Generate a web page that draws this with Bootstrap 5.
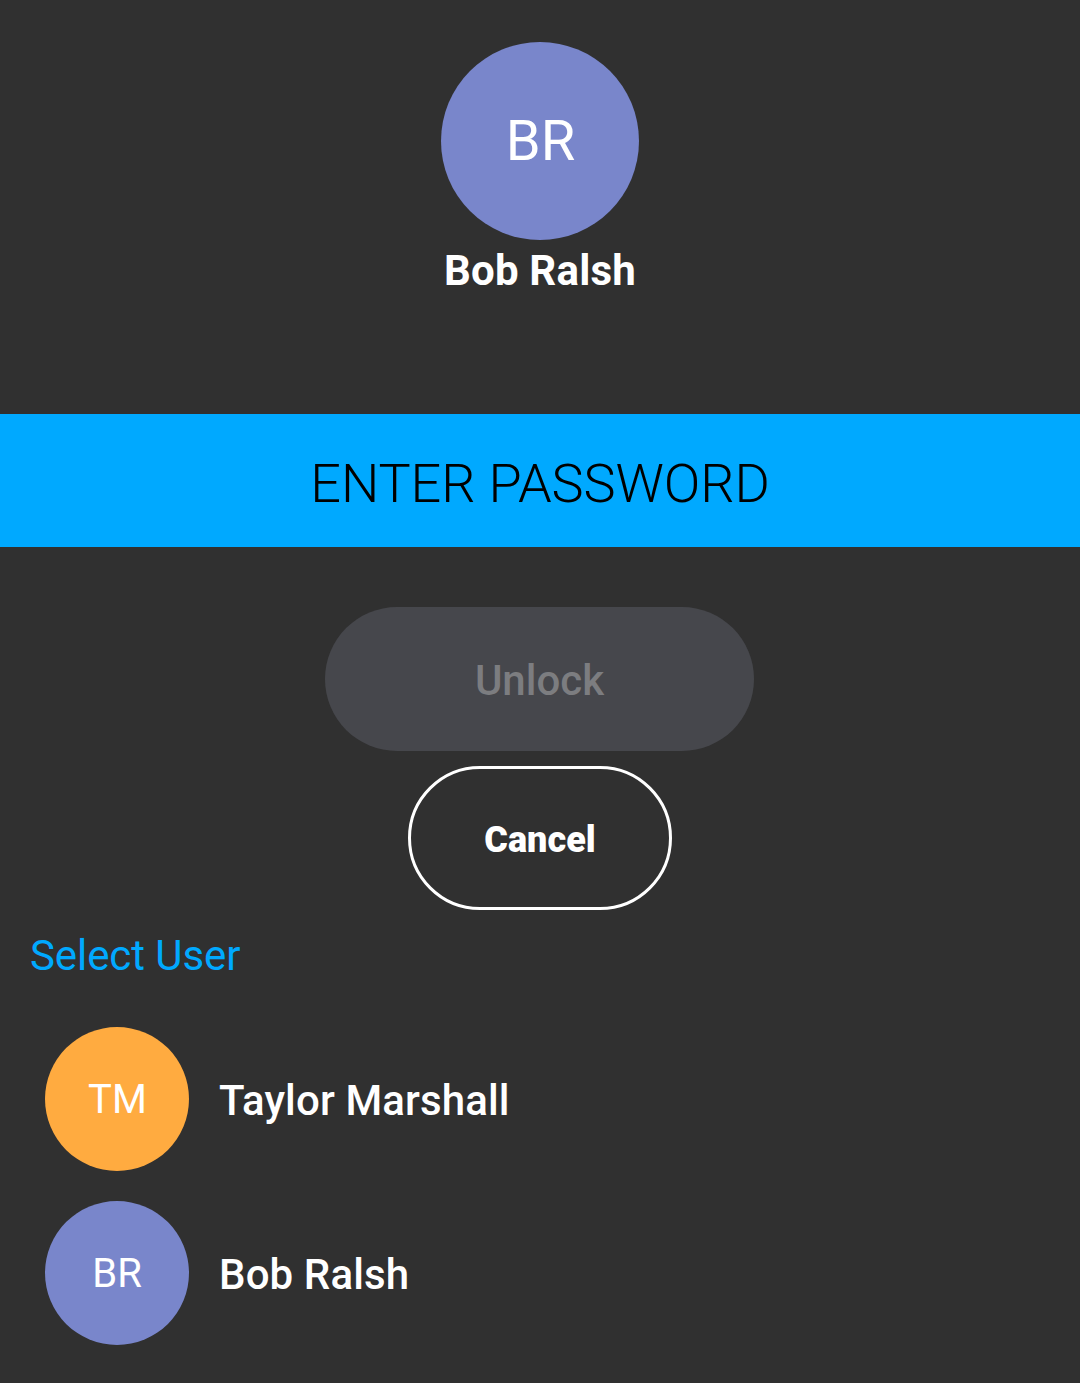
<!DOCTYPE html>
<html lang="en">
<head>
<meta charset="utf-8">
<title>Unlock</title>
<link rel="stylesheet" href="https://cdn.jsdelivr.net/npm/bootstrap@5.3.0/dist/css/bootstrap.min.css">
<style>
html, body { height: 100%; }
body { background: #303030; font-family: Roboto, sans-serif; color: #fff; overflow: hidden; }
.avatar-disc { border-radius: 50%; color: #fff; display: flex; align-items: center; justify-content: center; flex: none; }
.avatar-xl { width: 198px; height: 198px; font-size: 56px; margin-top: 42px; padding-left: 1px; }
.avatar-sm { width: 144px; height: 144px; font-size: 40px; padding-top: 1px; }
.avatar-sm.tone-orange { padding-left: 1px; }
.tone-blue { background: #7986cb; }
.tone-orange { background: #ffab40; }
.hero-name { font-size: 42px; font-weight: 700; line-height: 60px; margin-top: 1px; letter-spacing: .2px; }
.pw-band { background: #00a9ff; color: #000; height: 133px; margin-top: 113px; font-size: 54px; font-weight: 300; letter-spacing: -.1px; padding-top: 6px; }
.btn.unlock-btn:disabled { width: 429px; height: 144px; border-radius: 72px; border: 0; background: #46474c; color: #7c7d80; font-size: 42px; font-weight: 500; margin-top: 60px; margin-right: 1px; opacity: 1; padding-top: 8px; }
.btn.cancel-btn { width: 264px; height: 144px; border-radius: 72px; border: 3px solid #fff; background: transparent; color: #fff; font-size: 36px; font-weight: 900; margin-top: 15px; padding-top: 10px; }
.section-label { color: #00a9ff; font-size: 42px; line-height: 60px; padding-left: 30px; margin-top: 16px; letter-spacing: -.08px; }
.user-list { padding-left: 45px; margin-top: 41px; gap: 30px; }
.user-name { font-size: 42px; font-weight: 500; margin-left: 30px; padding-top: 3px; letter-spacing: .12px; }
</style>
</head>
<body>
<main class="d-flex flex-column">
  <div class="d-flex flex-column align-items-center">
    <div class="avatar-disc avatar-xl tone-blue">BR</div>
    <div class="hero-name">Bob Ralsh</div>
  </div>
  <div class="pw-band d-flex align-items-center justify-content-center">ENTER PASSWORD</div>
  <div class="d-flex flex-column align-items-center">
    <button class="btn unlock-btn" type="button" disabled>Unlock</button>
    <button class="btn cancel-btn" type="button">Cancel</button>
  </div>
  <div class="section-label">Select User</div>
  <div class="user-list d-flex flex-column">
    <div class="d-flex align-items-center">
      <div class="avatar-disc avatar-sm tone-orange">TM</div>
      <div class="user-name">Taylor Marshall</div>
    </div>
    <div class="d-flex align-items-center">
      <div class="avatar-disc avatar-sm tone-blue">BR</div>
      <div class="user-name">Bob Ralsh</div>
    </div>
  </div>
</main>
<script src="https://cdn.jsdelivr.net/npm/bootstrap@5.3.0/dist/js/bootstrap.bundle.min.js"></script>
</body>
</html>
